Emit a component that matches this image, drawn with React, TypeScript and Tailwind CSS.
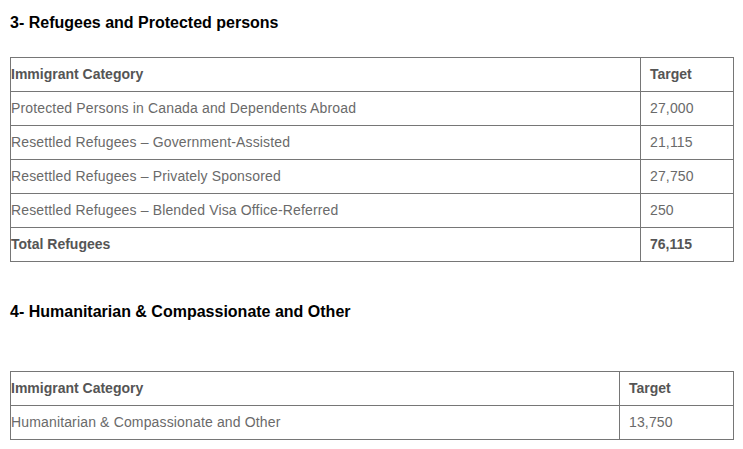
import React from "react";

const rows1: [string, string, boolean?][] = [
  ["Protected Persons in Canada and Dependents Abroad", "27,000"],
  ["Resettled Refugees – Government-Assisted", "21,115"],
  ["Resettled Refugees – Privately Sponsored", "27,750"],
  ["Resettled Refugees – Blended Visa Office-Referred", "250"],
  ["Total Refugees", "76,115", true],
];

function Table({ rows, col2 }: { rows: [string, string, boolean?][]; col2: string }) {
  return (
    <table className="w-[724px] border-collapse text-[14px] text-[#6a6a6a] tracking-[0.15px]">
      <colgroup>
        <col />
        <col className={col2} />
      </colgroup>
      <tbody>
        <tr className="h-[34px]">
          <td className="border border-[#767676] pl-0 font-bold text-[#555] tracking-normal">Immigrant Category</td>
          <td className="border border-[#767676] pl-[9px] font-bold text-[#555] tracking-normal">Target</td>
        </tr>
        {rows.map(([a, b, bold]) => (
          <tr key={a} className="h-[34px]">
            <td className={"border border-[#767676] pl-0 " + (bold ? "font-bold text-[#555] tracking-normal" : "")}>{a}</td>
            <td className={"border border-[#767676] pl-[9px] " + (bold ? "font-bold text-[#555] tracking-normal" : "")}>{b}</td>
          </tr>
        ))}
      </tbody>
    </table>
  );
}

export default function App() {
  return (
    <div className="w-[743px] h-[449px] bg-white pl-[10px] font-['Liberation_Sans',Arial,sans-serif] overflow-hidden">
      <h2 className="pt-[14px] text-[16px] leading-[18px] font-bold text-black">3- Refugees and Protected persons</h2>
      <div className="mt-[25px]">
        <Table rows={rows1} col2="w-[93px]" />
      </div>
      <h2 className="mt-[41px] text-[16px] leading-[18px] font-bold text-black">4- Humanitarian &amp; Compassionate and Other</h2>
      <div className="mt-[50px]">
        <Table rows={[["Humanitarian & Compassionate and Other", "13,750"]]} col2="w-[114px]" />
      </div>
    </div>
  );
}
